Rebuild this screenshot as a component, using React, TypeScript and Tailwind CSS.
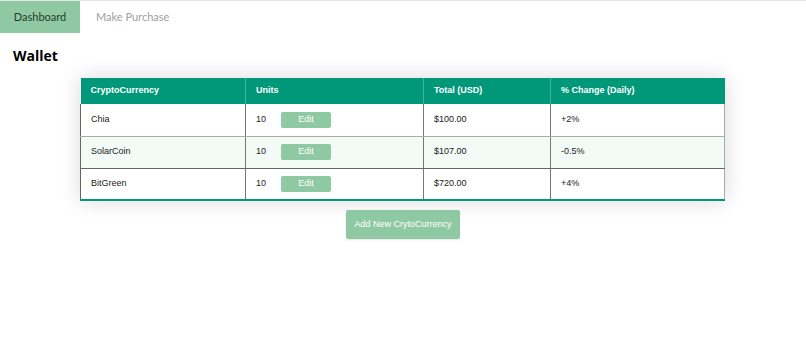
import React from "react";

const rows = [
  { name: "Chia", units: "10", total: "$100.00", change: "+2%" },
  { name: "SolarCoin", units: "10", total: "$107.00", change: "-0.5%" },
  { name: "BitGreen", units: "10", total: "$720.00", change: "+4%" },
];

export default function App() {
  return (
    <div className="w-[806px] h-[362px] bg-white" style={{ fontFamily: 'Lato, "Open Sans", sans-serif' }}>
      <nav className="flex border-t border-[#e5e5e5] h-[33px]">
        <div className="w-[80px] h-full bg-[#8fc9a3] flex items-center justify-center text-[11px] text-[#1f3d2b]">
          Dashboard
        </div>
        <div className="px-[16px] h-full flex items-center text-[11px] text-[#a0a0a0]">Make Purchase</div>
      </nav>
      <h1 className="ml-[13px] mt-[13px] text-[14px] font-bold leading-[20px] text-black" style={{ fontFamily: '"Open Sans", sans-serif' }}>Wallet</h1>
      <div className="flex justify-center mt-[12px]">
        <div className="ml-[-1px]">
          <table
            className="border-collapse text-[9px] shadow-[0_0_20px_rgba(0,0,0,0.15)] border-b-2 border-[#009879]"
            style={{ fontFamily: '"Liberation Sans", Arial, sans-serif' }}
          >
            <thead>
              <tr className="bg-[#009879] text-white font-bold h-[26px] text-left">
                <th className="w-[165px] px-[10px] border-r border-[#3fb298] font-bold">CryptoCurrency</th>
                <th className="w-[178px] px-[10px] border-r border-[#3fb298] font-bold">Units</th>
                <th className="w-[127px] px-[10px] border-r border-[#3fb298] font-bold">Total (USD)</th>
                <th className="w-[174px] px-[10px] font-bold">% Change (Daily)</th>
              </tr>
            </thead>
            <tbody className="text-[#222]">
              {rows.map((r, i) => {
                const bb = i === 0 ? "border-b border-b-[#aaa]" : i === 1 ? "border-b border-b-[#666]" : "";
                return (
                  <tr key={r.name} className={`h-[32px] ${i === 1 ? "bg-[#f3fbf7]" : "bg-white"}`}>
                    <td className={`px-[10px] border-l border-[#666] border-r border-r-[#777] ${bb}`}>{r.name}</td>
                    <td className={`px-[10px] border-r border-[#777] ${bb}`}>
                      <div className="flex items-center">
                        <span className="w-[25px]">{r.units}</span>
                        <button className="w-[50px] h-[16px] rounded-[2px] bg-[#8fc9a3] text-white text-[9px]">Edit</button>
                      </div>
                    </td>
                    <td className={`px-[10px] border-r border-[#777] ${bb}`}>{r.total}</td>
                    <td className={`px-[10px] border-r border-[#aaa] ${bb}`}>{r.change}</td>
                  </tr>
                );
              })}
            </tbody>
          </table>
        </div>
      </div>
      <div className="flex justify-center mt-[9px]">
        <button
          className="w-[114px] h-[29px] rounded-[2px] bg-[#8fc9a3] text-white text-[9px] shadow-[0_1px_2px_rgba(0,0,0,0.1)]"
          style={{ fontFamily: '"Liberation Sans", Arial, sans-serif' }}
        >
          Add New CrytoCurrency
        </button>
      </div>
    </div>
  );
}
